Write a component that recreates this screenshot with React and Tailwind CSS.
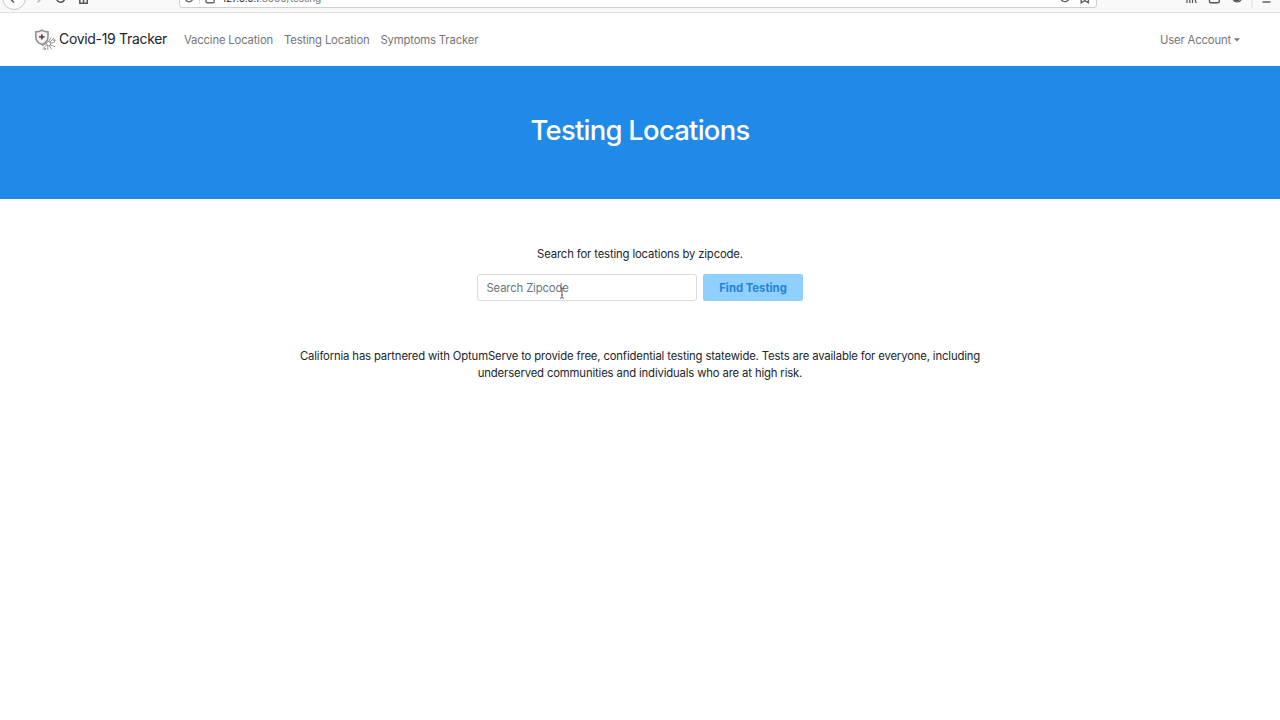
import React from "react";

function BrowserBar() {
  return (
    <header className="flex h-[13px] items-end overflow-hidden border-b border-[#e3e3e5] bg-[#f9f9fb]">
      <svg className="h-[12px] w-[179px] shrink-0" viewBox="0 0 179 12" fill="none" stroke="#55555a" strokeWidth="1.5">
        <circle cx="14" cy="-2" r="11.5" fill="#fff" stroke="#c4c4c8" strokeWidth="1" />
        <path d="M9.5 -2 L14 2.6" />
        <path d="M37.5 2.4 L42 -2" stroke="#b9b9bd" />
        <path d="M56.5 -1 A4.2 4.2 0 0 0 64.5 -0.5" />
        <path d="M79.8 -2 V3.2 H87.2 V-2 M83.5 3 V0" />
      </svg>
      <div className="mb-[4px] flex h-[22px] w-[918px] shrink-0 items-end rounded-[3px] border border-[#cfcfd3] bg-white">
        <svg className="h-[8px] w-[42px] shrink-0" viewBox="0 0 42 8" fill="none" stroke="#66666b" strokeWidth="1.4">
          <path d="M5.2 0 A4 4 0 0 0 12.8 0" />
          <path d="M19.5 0 V5" stroke="#dcdce0" strokeWidth="1" />
          <rect x="26" y="-2.5" width="8.2" height="6.2" rx="1.2" />
        </svg>
        <span className="mb-[2px] whitespace-nowrap font-['Inter',sans-serif] text-[10.2px] leading-[13px] tracking-[-0.2px] text-[#77777b]">
          <span className="text-[#2c2c30]">127.0.0.1</span>:8000/testing
        </span>
        <svg className="ml-auto h-[8px] w-[40px] shrink-0" viewBox="0 0 40 8" fill="none" stroke="#5f5f64" strokeWidth="1.4">
          <path d="M4.7 0 A4.6 4.6 0 0 0 13 0" />
          <path d="M25.2 -1 V3.8 L28.8 1.6 L32.4 3.8 V-1" />
        </svg>
      </div>
      <svg className="h-[12px] w-[183px] shrink-0" viewBox="0 0 183 12" fill="none" stroke="#55555a" strokeWidth="1.4">
        <path d="M90 -2 V3 M92.8 -2 V3 M95.5 -2 V3 M97.3 -2 L99.3 3" strokeWidth="1.2" />
        <path d="M112.5 -3 V1.5 Q112.5 2.8 113.8 2.8 H121 Q122.3 2.8 122.3 1.5 V-3 M115.5 0 V-2" />
        <path d="M136 -1 A4.5 4.5 0 0 0 144.4 -1 M138 0.3 H142" />
        <path d="M155 0 V8" stroke="#dcdce0" strokeWidth="1" />
        <path d="M165.5 2 H173.5" />
      </svg>
    </header>
  );
}

function Logo() {
  return (
    <svg className="h-[22px] w-[22px] shrink-0" viewBox="0 0 22 22" fill="none">
      <path d="M8 1.2 C6 2.4 3.5 2.9 1.8 2.9 V8 C1.8 11.6 4 14 8 15.4 C11.7 14 14 11.6 14 8 V2.9 C12 2.9 9.8 2.4 8 1.2 Z" fill="#f4f4f4" stroke="#939393" strokeWidth="1.6" />
      <path d="M7.8 5.2 V10.6 M5.1 7.9 H10.5" stroke="#75404f" strokeWidth="1.7" />
      <g stroke="#8f8f8f" strokeWidth="0.9" strokeLinecap="round">
        <path d="M14.5 12.5 L17 8.8 M16 13 L19.8 9.2 M16.8 14.3 L20.6 13 M16.5 16 L20.6 17.5 M15.4 16.9 L17.5 20 M13.8 17 L13.8 20.6 M12.6 16 L9 19.5 M12.2 14.6 L8.2 16.8" />
        <circle cx="14.6" cy="14.7" r="2.1" />
        <circle cx="10.8" cy="19.8" r="0.8" />
        <circle cx="20.2" cy="11.2" r="0.7" />
      </g>
    </svg>
  );
}

function Navbar() {
  return (
    <nav className="flex h-[53px] items-center bg-white pl-[34px] pr-[40px] pt-[1px] text-[11.3px] tracking-[-0.16px] text-[#757575]">
      <a className="flex w-[150px] items-center whitespace-nowrap text-[#212529]">
        <Logo />
        <span className="-mt-[3px] ml-[3px] text-[14px] tracking-[-0.32px]">Covid-19 Tracker</span>
      </a>
      <a className="w-[100px] whitespace-nowrap">Vaccine Location</a>
      <a className="w-[96.5px] whitespace-nowrap">Testing Location</a>
      <a className="whitespace-nowrap">Symptoms Tracker</a>
      <a className="ml-auto flex items-center whitespace-nowrap">
        User Account
        <svg className="-mt-[1px] ml-[3px] h-[4px] w-[6px]" viewBox="0 0 6 4" fill="#757575">
          <path d="M0 0.3 H6 L3 3.5 Z" />
        </svg>
      </a>
    </nav>
  );
}

function IBeam() {
  return (
    <svg className="absolute left-[81px] top-[12px] h-[12px] w-[6px]" viewBox="0 0 6 12" fill="none" stroke="#555" strokeWidth="0.9">
      <path d="M1 0.8 Q3 0.8 3 2 Q3 0.8 5 0.8 M3 2 V10 M1 11.2 Q3 11.2 3 10 Q3 11.2 5 11.2 M2 8 H4" />
    </svg>
  );
}

export default function App() {
  return (
    <div className="h-[720px] w-[1280px] overflow-hidden bg-white font-['Inter',sans-serif] text-[#212529]">
      <BrowserBar />
      <Navbar />
      <section className="flex h-[132.5px] items-center justify-center bg-[#1f8ae8]">
        <h1 className="-mt-[4px] whitespace-nowrap text-[27.4px] font-medium leading-[34px] tracking-[-0.72px] text-white">Testing Locations</h1>
      </section>
      <main className="flex flex-col items-center pt-[47.5px] text-[11.3px] leading-[17px] tracking-[-0.145px]">
        <p className="whitespace-nowrap">Search for testing locations by zipcode.</p>
        <form className="mt-[11px] flex gap-[6px]">
          <div className="relative flex h-[27px] w-[220px] items-center rounded-[3px] border border-[#d8dbdf] pl-[8.5px] pt-[1px] text-[#6c757d]">
            <span>Search Zipcode</span>
            <IBeam />
          </div>
          <button type="button" className="h-[27px] w-[100px] whitespace-nowrap rounded-[2px] bg-[#90d0ff] pt-[1px] font-bold tracking-normal text-[#2483dc]">
            Find Testing
          </button>
        </form>
        <p className="mt-[47px] whitespace-nowrap text-center">
          California has partnered with OptumServe to provide free, confidential testing statewide. Tests are available for everyone, including
          <br />
          underserved communities and individuals who are at high risk.
        </p>
      </main>
    </div>
  );
}
